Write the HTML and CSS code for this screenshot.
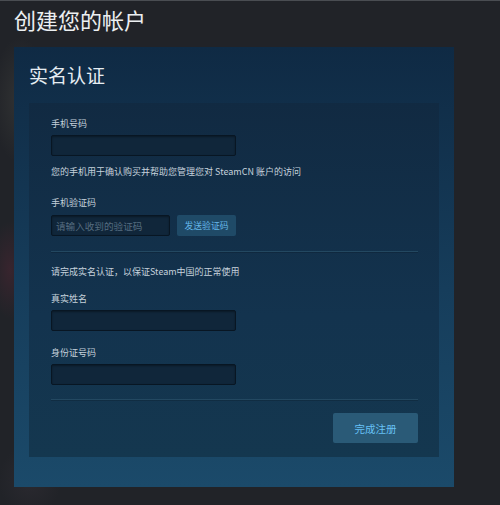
FILE: index.html
```html
<!DOCTYPE html>
<html lang="zh-CN">
<head>
<meta charset="utf-8">
<title>创建您的帐户</title>
<link rel="stylesheet" href="styles.css">
</head>
<body>
<div class="topline"></div>
<div class="art"></div>
<div class="page">
  <h1 class="title">创建您的帐户</h1>
  <div class="panel">
    <h2 class="heading">实名认证</h2>
    <div class="inner">
      <div class="label first">手机号码</div>
      <div class="input wide"></div>
      <div class="help">您的手机用于确认购买并帮助您管理您对 SteamCN 账户的访问</div>
      <div class="label l2">手机验证码</div>
      <div class="row">
        <div class="input code"><span class="ph">请输入收到的验证码</span></div>
        <div class="sendbtn">发送验证码</div>
      </div>
      <div class="sep s1"></div>
      <div class="help h2">请完成实名认证，以保证Steam中国的正常使用</div>
      <div class="label l3">真实姓名</div>
      <div class="input wide i3"></div>
      <div class="label l4">身份证号码</div>
      <div class="input wide i4"></div>
      <div class="sep s2"></div>
      <div class="actions">
        <div class="finish">完成注册</div>
      </div>
    </div>
  </div>
</div>
</body>
</html>
```
FILE: styles.css
```css
html, body {
  margin: 0;
  padding: 0;
}
body {
  width: 500px;
  height: 505px;
  overflow: hidden;
  background: #212328;
  font-family: "Noto Sans CJK SC", "Noto Sans", sans-serif;
  position: relative;
}
.topline {
  position: absolute;
  left: 0;
  top: 0;
  width: 500px;
  height: 1px;
  background: #4a4d52;
}
.art {
  position: absolute;
  left: 0;
  top: 10px;
  width: 70px;
  height: 495px;
  background:
    radial-gradient(ellipse 30px 70px at 10px 260px, rgba(110,40,60,0.30), rgba(0,0,0,0) 70%),
    radial-gradient(ellipse 40px 90px at 20px 90px, rgba(90,90,80,0.28), rgba(0,0,0,0) 70%),
    radial-gradient(ellipse 45px 50px at 30px 470px, rgba(70,60,70,0.25), rgba(0,0,0,0) 70%);
}
.page {
  position: relative;
  padding-left: 14px;
  padding-top: 6px;
}
.title {
  margin: 0;
  font-size: 22px;
  line-height: 26px;
  font-weight: 400;
  color: #eceff1;
  letter-spacing: 0;
}
.panel {
  margin-top: 15px;
  width: 440px;
  box-sizing: border-box;
  padding: 15px 15px 30px 15px;
  background: linear-gradient(180deg, #0f2a44 0%, #163d5b 55%, #1b4a6a 100%);
}
.heading {
  margin: 0;
  font-size: 19px;
  line-height: 26px;
  font-weight: 400;
  color: #e6edf2;
  height: 41px;
}
.inner {
  background: linear-gradient(180deg, #112a42 0%, #13334e 60%, #14374f 100%);
  padding: 12px 21px 14px 22px;
}
.label, .help {
  font-size: 9px;
  line-height: 17px;
  color: #c6d2dc;
  white-space: nowrap;
}
.help {
  line-height: 16px;
  margin-top: 8px;
}
.input {
  height: 21px;
  box-sizing: border-box;
  background: #10263a;
  border: 1px solid #081623;
  border-radius: 2px;
  box-shadow: inset 0 1px 2px rgba(0,0,0,0.35);
}
.input.wide {
  width: 185px;
  margin-top: 3px;
}
.l2 { margin-top: 14px; }
.row {
  display: flex;
  gap: 7px;
  margin-top: 4px;
}
.input.code {
  width: 119px;
  display: flex;
  align-items: center;
  padding-left: 4px;
}
.ph {
  font-size: 9.6px;
  color: #566d80;
}
.sendbtn {
  width: 59px;
  height: 21px;
  display: flex;
  align-items: center;
  justify-content: center;
  background: #1f4a67;
  color: #66b8ea;
  font-size: 8.8px;
  border-radius: 2px;
}
.sep {
  height: 1px;
  background: #234861;
  box-shadow: 0 1px 0 rgba(0,0,0,0.15);
}
.s1 { margin-top: 15px; }
.help.h2 { margin-top: 12px; }
.l3 { margin-top: 10px; }
.input.i3 { margin-top: 3px; }
.l4 { margin-top: 13px; }
.input.i4 { margin-top: 3px; }
.s2 { margin-top: 14px; }
.actions {
  display: flex;
  justify-content: flex-end;
  margin-top: 13px;
}
.finish {
  width: 85px;
  height: 30px;
  display: flex;
  align-items: center;
  justify-content: center;
  background: #2a5a77;
  color: #67c1f5;
  font-size: 10.5px;
  border-radius: 2px;
}
```
